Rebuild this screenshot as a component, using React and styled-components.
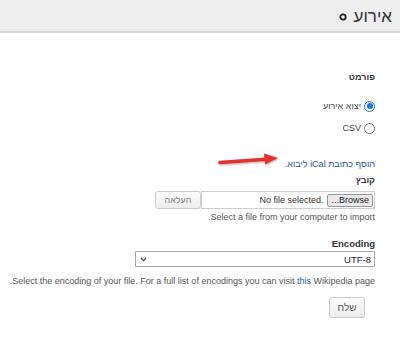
import React from "react";
import styled, { createGlobalStyle } from "styled-components";

const Global = createGlobalStyle`
  html, body { margin: 0; padding: 0; background: #fff; }
  body { font-family: "Liberation Sans", Arial, sans-serif; }
`;

const Page = styled.div`
  direction: rtl;
  width: 400px;
  height: 360px;
  font-size: 9px;
  color: #333;
  overflow: hidden;
`;

const Header = styled.div`
  height: 33px;
  background: #eeeeee;
  border-bottom: 2px solid #d6d6d6;
  display: flex;
  align-items: center;
  gap: 7px;
  padding: 3px 8px 0 0;
  box-sizing: border-box;
`;

const Title = styled.h1`
  margin: 0;
  font-size: 17px;
  font-weight: normal;
  color: #333;
`;

const Content = styled.div`
  padding: 0 25px 0 8px;
  display: flex;
  flex-direction: column;
`;

const Label = styled.div`
  font-weight: bold;
  line-height: 12px;
  color: #333;
  font-size: ${(p) => p.$size || 9}px;
  margin-top: ${(p) => p.$mt || 0}px;
`;

const RadioRow = styled.label`
  display: flex;
  align-items: center;
  gap: 3px;
  line-height: 12px;
  height: 12px;
  color: #444;
  margin-top: ${(p) => p.$mt || 0}px;
`;

const RadioDot = styled.span`
  width: 11px;
  height: 11px;
  border-radius: 50%;
  box-sizing: border-box;
  border: 1px solid ${(p) => (p.$on ? "#1a73e8" : "#767676")};
  background: #fff;
  display: flex;
  align-items: center;
  justify-content: center;
  &::after {
    content: "";
    width: 6px;
    height: 6px;
    border-radius: 50%;
    background: ${(p) => (p.$on ? "#1a73e8" : "transparent")};
  }
`;

const LinkRow = styled.div`
  position: relative;
  line-height: 12px;
  margin-top: ${(p) => p.$mt || 0}px;
`;

const BlueLink = styled.a`
  color: #1f4f8f;
  text-decoration: none;
`;

const Arrow = styled.svg`
  position: absolute;
  left: 200px;
  top: -10px;
`;

const FileRow = styled.div`
  display: flex;
  align-items: stretch;
  height: 18px;
  margin-top: 5px;
`;

const FileBox = styled.div`
  width: 174px;
  box-sizing: border-box;
  border: 1px solid #cfcfcf;
  background: #fff;
  display: flex;
  align-items: center;
  gap: 4px;
  padding: 0 1px;
`;

const BrowseBtn = styled.span`
  height: 13px;
  padding: 0 3px;
  box-sizing: border-box;
  border: 1px solid #9a9a9a;
  border-radius: 2px;
  background: #e9e9e9;
  color: #222;
  font-size: 9px;
  line-height: 11px;
  display: flex;
  align-items: center;
`;

const NoFile = styled.span`
  direction: ltr;
  color: #333;
  font-size: 9px;
`;

const Btn = styled.button`
  font-family: "Liberation Sans", Arial, sans-serif;
  width: ${(p) => p.$w}px;
  height: ${(p) => p.$h}px;
  border: 1px solid #cccccc;
  border-radius: 3px;
  background: linear-gradient(#fdfdfd, #ececec);
  color: ${(p) => p.$color || "#666"};
  font-size: ${(p) => p.$fs || 9}px;
  padding: 0;
  margin: 0;
  cursor: pointer;
`;

const Help = styled.div`
  color: #555;
  line-height: 12px;
  white-space: nowrap;
  margin-top: ${(p) => p.$mt || 0}px;
`;

const LtrRun = styled.span`
  direction: ltr;
  unicode-bidi: isolate;
`;

const SelectBox = styled.div`
  width: 240px;
  height: 16px;
  box-sizing: border-box;
  border: 1px solid #a9a9a9;
  background: #fff;
  display: flex;
  align-items: center;
  justify-content: space-between;
  padding: 0 3px 0 4px;
  margin-top: 1px;
  font-size: 9.5px;
  color: #222;
`;

const Inline = styled.a`
  color: #2a5db0;
  text-decoration: none;
`;

const SendWrap = styled.div`
  margin-top: 10px;
  margin-right: 10px;
`;

export default function App() {
  return (
    <Page>
      <Global />
      <Header>
        <Title>אירוע</Title>
        <svg width="8" height="8" viewBox="0 0 8 8">
          <circle cx="4" cy="4" r="2.7" fill="#fff" stroke="#222" strokeWidth="1.8" />
        </svg>
      </Header>
      <Content>
        <Label $mt={38}>פורמט</Label>
        <RadioRow $mt={17}>
          <RadioDot $on />
          <span>יצוא אירוע</span>
        </RadioRow>
        <RadioRow $mt={10}>
          <RadioDot />
          <span>CSV</span>
        </RadioRow>
        <LinkRow $mt={24}>
          <BlueLink href="#">הוסף כתובת iCal ליבוא.</BlueLink>
          <Arrow width="76" height="20" viewBox="0 0 76 20">
            <defs>
              <filter id="sh" x="-20%" y="-50%" width="140%" height="200%">
                <feDropShadow dx="0.5" dy="1" stdDeviation="0.8" floodColor="#000" floodOpacity="0.35" />
              </filter>
            </defs>
            <g filter="url(#sh)">
              <path d="M12 14.5 L58 11.2" stroke="#e3302c" strokeWidth="3.6" strokeLinecap="round" fill="none" />
              <path d="M56 5.5 L70 10 L57 16.5 Z" fill="#e3302c" />
            </g>
          </Arrow>
        </LinkRow>
        <Label $mt={4}>קובץ</Label>
        <FileRow>
          <FileBox>
            <BrowseBtn>Browse...</BrowseBtn>
            <NoFile>No file selected.</NoFile>
          </FileBox>
          <Btn $w={46} $h={18} $color="#777">העלאה</Btn>
        </FileRow>
        <Help $mt={2}>Select a file from your computer to import.</Help>
        <Label $mt={15} $size={9.5}>Encoding</Label>
        <SelectBox>
          <span>UTF-8</span>
          <svg width="7" height="5" viewBox="0 0 7 5">
            <path d="M1 1 L3.5 3.6 L6 1" stroke="#444" strokeWidth="1.1" fill="none" />
          </svg>
        </SelectBox>
        <Help $mt={8}>
          <LtrRun>
            Select the encoding of your file. For a full list of encodings you can visit <Inline href="#">this</Inline> Wikipedia page
          </LtrRun>
          .
        </Help>
        <SendWrap>
          <Btn $w={36} $h={21} $fs={10} $color="#555">שלח</Btn>
        </SendWrap>
      </Content>
    </Page>
  );
}
